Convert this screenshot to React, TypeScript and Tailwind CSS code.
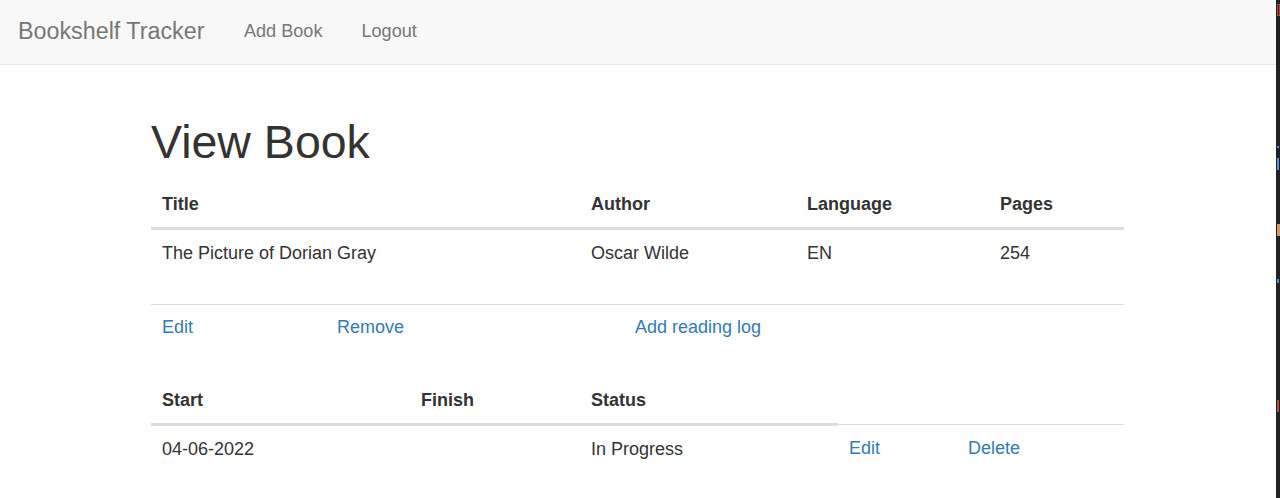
import type { ReactNode } from "react";

const TH =
  "border-b-[3px] border-[#ddd] pl-[11px] pr-[10px] py-[10px] text-left align-bottom font-bold leading-[26px]";
const TD = "border-t border-[#ddd] pl-[11px] pr-[10px] py-[10px] align-top leading-[26px]";
const LINK_TD = "border-t border-[#ddd] pl-[11px] pr-[10px] pt-[9px] pb-[10px] align-top leading-[26px]";
const LINK = "text-[#337ab7] hover:text-[#23527c] hover:underline";

function Table({
  widths,
  gap = "mb-[27px]",
  children,
}: {
  widths: number[];
  gap?: string;
  children: ReactNode;
}) {
  return (
    <table className={`${gap} w-[973px] table-fixed border-collapse`}>
      <colgroup>
        {widths.map((w, i) => (
          <col key={i} style={{ width: w }} />
        ))}
      </colgroup>
      {children}
    </table>
  );
}

export default function App() {
  return (
    <div
      className="flex h-[498px] w-full overflow-hidden bg-white text-[18px] text-[#333]"
      style={{ fontFamily: '"Liberation Sans", Arial, Helvetica, sans-serif' }}
    >
      <div className="min-w-0 flex-1">
        <nav className="flex h-[65px] items-center border-b border-[#e7e7e7] bg-[#f8f8f8] pb-px">
          <a href="#" className="pl-[18px] pr-[20px] text-[23.3px] text-[#777] hover:text-[#5e5e5e]">
            Bookshelf Tracker
          </a>
          <a href="#" className="px-[19.5px] text-[18.1px] text-[#777] hover:text-[#333]">
            Add Book
          </a>
          <a href="#" className="px-[19.5px] text-[18.1px] text-[#777] hover:text-[#333]">
            Logout
          </a>
        </nav>

        <main className="pl-[151px] pt-[52px]">
          <h1 className="mb-[13px] text-[46.5px] leading-[1.1] font-normal">View Book</h1>

          <Table widths={[429, 216, 193, 135]} gap="mb-[28px]">
            <thead>
              <tr>
                <th className={TH}>Title</th>
                <th className={TH}>Author</th>
                <th className={TH}>Language</th>
                <th className={TH}>Pages</th>
              </tr>
            </thead>
            <tbody>
              <tr>
                <td className={TD}>The Picture of Dorian Gray</td>
                <td className={TD}>Oscar Wilde</td>
                <td className={TD}>EN</td>
                <td className={TD}>254</td>
              </tr>
            </tbody>
          </Table>

          <Table widths={[175, 298, 500]}>
            <tbody>
              <tr>
                <td className={LINK_TD}>
                  <a href="#" className={LINK}>Edit</a>
                </td>
                <td className={LINK_TD}>
                  <a href="#" className={LINK}>Remove</a>
                </td>
                <td className={LINK_TD}>
                  <a href="#" className={LINK}>Add reading log</a>
                </td>
              </tr>
            </tbody>
          </Table>

          <Table widths={[259, 170, 258, 119, 167]}>
            <thead>
              <tr>
                <th className={TH}>Start</th>
                <th className={TH}>Finish</th>
                <th className={TH}>Status</th>
              </tr>
            </thead>
            <tbody>
              <tr>
                <td className={TD}>04-06-2022</td>
                <td className={TD}></td>
                <td className={TD}>In Progress</td>
                <td className={TD}>
                  <a href="#" className={LINK}>Edit</a>
                </td>
                <td className={TD}>
                  <a href="#" className={LINK}>Delete</a>
                </td>
              </tr>
            </tbody>
          </Table>
        </main>
      </div>

      {/* edge of the editor window beside the browser */}
      <div className="relative h-full w-[4px] shrink-0 bg-[#1f2124]">
        <span className="absolute left-[1px] top-[4px] h-[12px] w-[3px] border border-[#c0463c]" />
        <span className="absolute left-[1px] top-[146px] h-[2px] w-[2px] bg-[#5a8fd6]" />
        <span className="absolute left-[1px] top-[158px] h-[12px] w-[2px] bg-[#5a8fd6]" />
        <span className="absolute left-[1px] top-[224px] h-[12px] w-[3px] bg-[#d89a5c]" />
        <span className="absolute left-[1px] top-[279px] h-[4px] w-[2px] bg-[#5a8fd6]" />
        <span className="absolute left-[1px] top-[400px] h-[12px] w-[2px] bg-[#c0463c]" />
      </div>
    </div>
  );
}
